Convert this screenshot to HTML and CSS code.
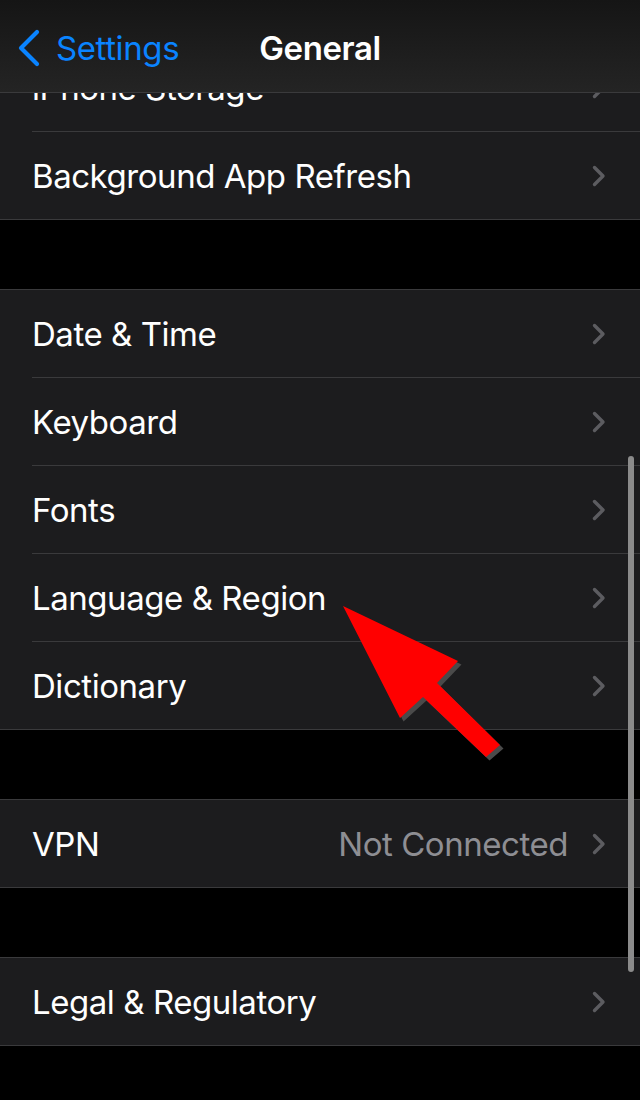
FILE: index.html
```html
<!DOCTYPE html>
<html>
<head>
<meta charset="utf-8">
<link rel="stylesheet" href="styles.css">
</head>
<body>
<div class="screen">
  <header class="nav">
    <div class="back">
      <svg class="back-chev" width="24" height="38" viewBox="0 0 24 38"><path d="M20 3 L4 19 L20 35" fill="none" stroke="#0a84ff" stroke-width="4.2" stroke-linecap="round" stroke-linejoin="round"/></svg>
      <span class="back-label">Settings</span>
    </div>
    <h1 class="title">General</h1>
  </header>

  <main class="list">
    <section class="group first">
      <div class="row"><div class="inner"><span class="label">iPhone Storage</span><svg class="chev" width="14" height="22" viewBox="0 0 14 22"><path d="M2.5 2.5 L11 11 L2.5 19.5" fill="none" stroke="#5c5c60" stroke-width="3.4" stroke-linecap="round" stroke-linejoin="round"/></svg></div></div>
      <div class="row"><div class="inner"><span class="label">Background App Refresh</span><svg class="chev" width="14" height="22" viewBox="0 0 14 22"><path d="M2.5 2.5 L11 11 L2.5 19.5" fill="none" stroke="#5c5c60" stroke-width="3.4" stroke-linecap="round" stroke-linejoin="round"/></svg></div></div>
    </section>

    <section class="group">
      <div class="row"><div class="inner"><span class="label">Date &amp; Time</span><svg class="chev" width="14" height="22" viewBox="0 0 14 22"><path d="M2.5 2.5 L11 11 L2.5 19.5" fill="none" stroke="#5c5c60" stroke-width="3.4" stroke-linecap="round" stroke-linejoin="round"/></svg></div></div>
      <div class="row"><div class="inner"><span class="label">Keyboard</span><svg class="chev" width="14" height="22" viewBox="0 0 14 22"><path d="M2.5 2.5 L11 11 L2.5 19.5" fill="none" stroke="#5c5c60" stroke-width="3.4" stroke-linecap="round" stroke-linejoin="round"/></svg></div></div>
      <div class="row"><div class="inner"><span class="label">Fonts</span><svg class="chev" width="14" height="22" viewBox="0 0 14 22"><path d="M2.5 2.5 L11 11 L2.5 19.5" fill="none" stroke="#5c5c60" stroke-width="3.4" stroke-linecap="round" stroke-linejoin="round"/></svg></div></div>
      <div class="row"><div class="inner"><span class="label">Language &amp; Region</span><svg class="chev" width="14" height="22" viewBox="0 0 14 22"><path d="M2.5 2.5 L11 11 L2.5 19.5" fill="none" stroke="#5c5c60" stroke-width="3.4" stroke-linecap="round" stroke-linejoin="round"/></svg></div></div>
      <div class="row"><div class="inner"><span class="label">Dictionary</span><svg class="chev" width="14" height="22" viewBox="0 0 14 22"><path d="M2.5 2.5 L11 11 L2.5 19.5" fill="none" stroke="#5c5c60" stroke-width="3.4" stroke-linecap="round" stroke-linejoin="round"/></svg></div></div>
    </section>

    <section class="group">
      <div class="row"><div class="inner"><span class="label">VPN</span><span class="value">Not Connected</span><svg class="chev" width="14" height="22" viewBox="0 0 14 22"><path d="M2.5 2.5 L11 11 L2.5 19.5" fill="none" stroke="#5c5c60" stroke-width="3.4" stroke-linecap="round" stroke-linejoin="round"/></svg></div></div>
    </section>

    <section class="group">
      <div class="row"><div class="inner"><span class="label">Legal &amp; Regulatory</span><svg class="chev" width="14" height="22" viewBox="0 0 14 22"><path d="M2.5 2.5 L11 11 L2.5 19.5" fill="none" stroke="#5c5c60" stroke-width="3.4" stroke-linecap="round" stroke-linejoin="round"/></svg></div></div>
    </section>
  </main>

  <div class="scrollbar"></div>

  <svg class="arrow" width="190" height="180" viewBox="0 0 190 180">
    <polygon points="13,16 128,71 107,93 170,155 156,167 93,107 70,128" fill="#4a4a4a" transform="translate(3.5,3.5)"/>
    <polygon points="13,16 128,71 107,93 170,155 156,167 93,107 70,128" fill="#ff0000"/>
  </svg>
</div>
</body>
</html>
```

FILE: styles.css
```css
html, body {
  margin: 0;
  padding: 0;
  background: #000;
}

.screen {
  position: relative;
  width: 640px;
  height: 1100px;
  overflow: hidden;
  background: #000;
  font-family: Inter, "Noto Sans", "Liberation Sans", sans-serif;
  color: #fff;
}

.nav {
  position: absolute;
  top: 0;
  left: 0;
  right: 0;
  height: 92px;
  z-index: 2;
  background: linear-gradient(#151515, #242424);
  border-bottom: 1px solid #3a3a3c;
  display: flex;
  align-items: center;
  justify-content: center;
}

.back {
  position: absolute;
  left: 17px;
  top: 29px;
  display: flex;
  align-items: center;
  gap: 15px;
}

.back-chev {
  display: block;
}

.back-label {
  color: #0a84ff;
  font-size: 33px;
  letter-spacing: -0.4px;
  line-height: 38px;
}

.title {
  margin: 0;
  font-size: 33px;
  font-weight: 600;
  letter-spacing: -0.4px;
  line-height: 38px;
  margin-top: 4px;
}

.list {
  padding-top: 43px;
}

.group {
  background: #1c1c1e;
  border-top: 1px solid #3a3a3c;
  border-bottom: 1px solid #3a3a3c;
  margin-bottom: 69px;
}

.row {
  padding-left: 32px;
}

.inner {
  height: 87px;
  display: flex;
  align-items: center;
  padding-right: 34px;
}

.row + .row .inner {
  border-top: 1px solid #3a3a3c;
}

.label {
  flex: 1;
  font-size: 33px;
  letter-spacing: -0.45px;
  white-space: nowrap;
}

.value {
  color: #8e8e93;
  font-size: 33px;
  letter-spacing: -0.45px;
  margin-right: 24px;
}

.chev {
  display: block;
  flex: none;
}

.scrollbar {
  position: absolute;
  left: 628px;
  top: 456px;
  width: 6px;
  height: 516px;
  border-radius: 3px;
  background: #8b8b8b;
}

.arrow {
  position: absolute;
  left: 330px;
  top: 590px;
}
```
